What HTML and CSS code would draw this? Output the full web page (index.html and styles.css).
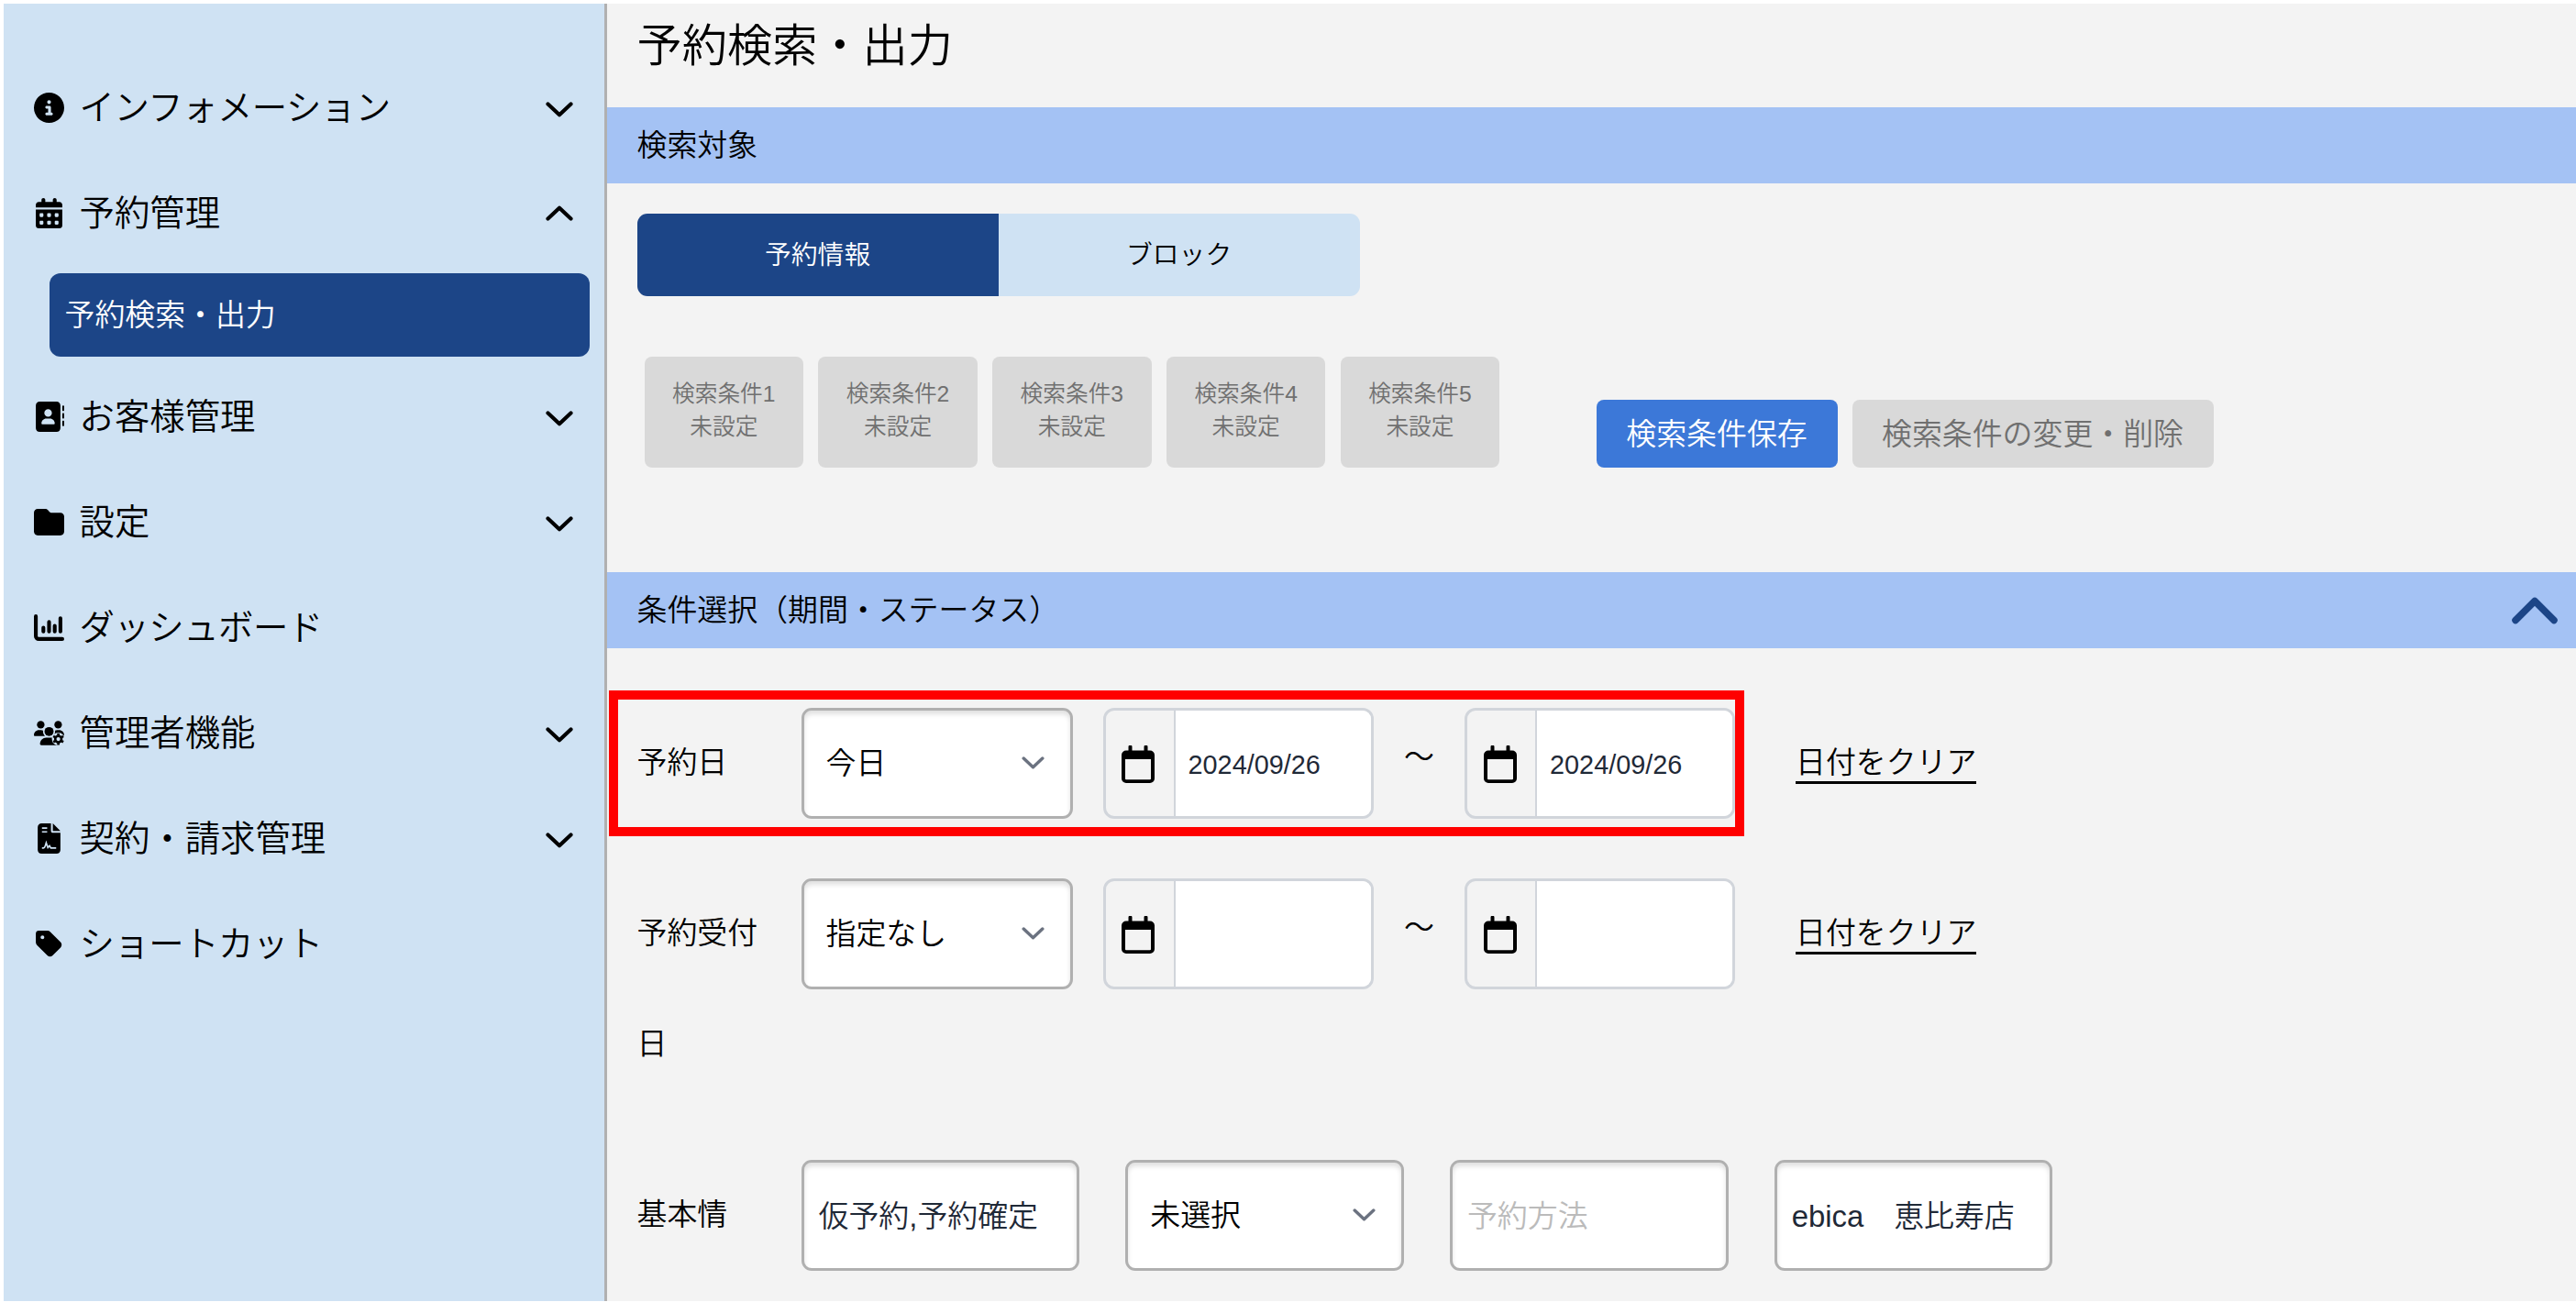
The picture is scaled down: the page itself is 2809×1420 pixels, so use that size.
FILE: index.html
```html
<!DOCTYPE html>
<html lang="ja">
<head>
    <meta charset="UTF-8">
    <meta name="viewport" content="width=device-width, initial-scale=1.0">
    <title>予約検索・出力</title>
    <link rel="stylesheet" href="styles.css">
</head>
<body>
    <!-- 共通アイコン -->
    <svg class="defs" width="0" height="0">
        <symbol id="chevron-down" viewBox="0 0 30 17">
            <path d="M2.5 2.5 L15 14.2 L27.5 2.5" fill="none" stroke="currentColor" stroke-width="4.2" stroke-linecap="round" stroke-linejoin="round"/>
        </symbol>
        <symbol id="chevron-up" viewBox="0 0 30 17">
            <path d="M2.5 14.5 L15 2.8 L27.5 14.5" fill="none" stroke="currentColor" stroke-width="4.2" stroke-linecap="round" stroke-linejoin="round"/>
        </symbol>
        <symbol id="calendar" viewBox="0 0 36 41">
            <path fill-rule="evenodd" d="M7.5 1.5a2 2 0 0 1 4 0V5.500h13V1.500a2 2 0 0 1 4 0V5.500H31a5 5 0 0 1 5 5V36a5 5 0 0 1-5 5H5a5 5 0 0 1-5-5V10.500a5 5 0 0 1 5-5h2.500zM4 15v21.300a1 1 0 0 0 1 1h26a1 1 0 0 0 1-1V15z"/>
        </symbol>
    </svg>

    <div class="layout">
        <nav class="sidebar">
            <a class="menu-item">
                <svg class="menu-icon" viewBox="0 0 512 512"><path d="M256 512A256 256 0 1 0 256 0a256 256 0 1 0 0 512zM216 336h24V272H216c-13.300 0-24-10.700-24-24s10.700-24 24-24h48c13.300 0 24 10.700 24 24v88h8c13.300 0 24 10.700 24 24s-10.700 24-24 24H216c-13.300 0-24-10.700-24-24s10.700-24 24-24zm40-208a32 32 0 1 1 0 64 32 32 0 1 1 0-64z"/></svg>
                <span class="kana">インフォメーション</span>
                <svg class="menu-arrow"><use href="#chevron-down"/></svg>
            </a>
            <a class="menu-item">
                <svg class="menu-icon" viewBox="0 0 448 512"><path d="M128 0c17.700 0 32 14.300 32 32V64H288V32c0-17.700 14.300-32 32-32s32 14.300 32 32V64h48c26.500 0 48 21.500 48 48v48H0V112C0 85.500 21.500 64 48 64H96V32c0-17.700 14.300-32 32-32zM0 192H448V464c0 26.500-21.500 48-48 48H48c-26.500 0-48-21.500-48-48V192zm64 80v32c0 8.800 7.200 16 16 16h32c8.800 0 16-7.200 16-16V272c0-8.800-7.200-16-16-16H80c-8.800 0-16 7.200-16 16zm128 0v32c0 8.800 7.200 16 16 16h32c8.800 0 16-7.200 16-16V272c0-8.800-7.200-16-16-16H208c-8.800 0-16 7.200-16 16zm144-16c-8.800 0-16 7.200-16 16v32c0 8.800 7.200 16 16 16h32c8.800 0 16-7.200 16-16V272c0-8.800-7.200-16-16-16H336zM64 400v32c0 8.800 7.200 16 16 16h32c8.800 0 16-7.200 16-16V400c0-8.800-7.200-16-16-16H80c-8.800 0-16 7.200-16 16zm144-16c-8.800 0-16 7.200-16 16v32c0 8.800 7.200 16 16 16h32c8.800 0 16-7.200 16-16V400c0-8.800-7.200-16-16-16H208zm112 16v32c0 8.800 7.200 16 16 16h32c8.800 0 16-7.200 16-16V400c0-8.800-7.200-16-16-16H336c-8.800 0-16 7.200-16 16z"/></svg>
                <span>予約管理</span>
                <svg class="menu-arrow open"><use href="#chevron-up"/></svg>
            </a>
            <a class="submenu-item active">予約検索・出力</a>
            <a class="menu-item">
                <svg class="menu-icon" viewBox="0 0 512 512"><path d="M96 0C60.700 0 32 28.700 32 64V448c0 35.300 28.700 64 64 64H384c35.300 0 64-28.700 64-64V64c0-35.300-28.700-64-64-64H96zM208 288h64c44.200 0 80 35.800 80 80c0 8.800-7.200 16-16 16H144c-8.800 0-16-7.200-16-16c0-44.200 35.800-80 80-80zm-32-96a64 64 0 1 1 128 0 64 64 0 1 1-128 0zM512 80c0-8.800-7.200-16-16-16s-16 7.200-16 16v64c0 8.800 7.200 16 16 16s16-7.200 16-16V80zM496 192c-8.800 0-16 7.200-16 16v64c0 8.800 7.200 16 16 16s16-7.200 16-16V208c0-8.800-7.200-16-16-16zm16 144c0-8.800-7.200-16-16-16s-16 7.200-16 16v64c0 8.800 7.200 16 16 16s16-7.200 16-16V336z"/></svg>
                <span>お客様管理</span>
                <svg class="menu-arrow"><use href="#chevron-down"/></svg>
            </a>
            <a class="menu-item">
                <svg class="menu-icon" viewBox="0 0 512 512"><path d="M64 480H448c35.300 0 64-28.700 64-64V160c0-35.300-28.700-64-64-64H288c-10.100 0-19.600-4.700-25.600-12.800L243.200 57.600C231.100 41.500 212.100 32 192 32H64C28.700 32 0 60.700 0 96V416c0 35.300 28.700 64 64 64z"/></svg>
                <span>設定</span>
                <svg class="menu-arrow"><use href="#chevron-down"/></svg>
            </a>
            <a class="menu-item">
                <svg class="menu-icon" viewBox="0 0 512 512"><path d="M32 64V400c0 26.500 21.500 48 48 48H480M160 256v64M256 160v160M352 224v96M448 96v224" fill="none" stroke="#000" stroke-width="64" stroke-linecap="round"/></svg>
                <span class="kana">ダッシュボード</span>
            </a>
            <a class="menu-item">
                <svg class="menu-icon" viewBox="0 0 640 512">
                    <circle cx="144" cy="80" r="80"/>
                    <circle cx="512" cy="80" r="80"/>
                    <path d="M0 298.700C0 239.800 47.800 192 106.700 192h42.700c15.900 0 31 3.500 44.600 9.700c-1.300 7.200-1.900 14.700-1.900 22.300c0 38.200 16.800 72.500 43.300 96H21.300C9.600 320 0 310.400 0 298.700z"/>
                    <path d="M405 320c26.500-23.500 43-57.800 43-96c0-7.600-.7-15-1.900-22.300c13.600-6.300 28.700-9.700 44.600-9.700h42.700C592.200 192 640 239.800 640 298.700c0 11.800-9.600 21.300-21.300 21.300z"/>
                    <circle cx="320" cy="224" r="96"/>
                    <path d="M128 485.300C128 411.700 187.700 352 261.300 352H378.700C430 352 474 381 496 423V512H154.700C140 512 128 500 128 485.300z"/>
                    <circle cx="516" cy="384" r="136" class="cut"/>
                    <circle cx="516" cy="384" r="66" fill="none" stroke="#000" stroke-width="50"/>
                    <path d="M516 262v45M516 461v45M410 323l39 22M583 423l39 22M410 445l39-22M583 345l39-22" stroke="#000" stroke-width="52"/>
                </svg>
                <span>管理者機能</span>
                <svg class="menu-arrow"><use href="#chevron-down"/></svg>
            </a>
            <a class="menu-item">
                <svg class="menu-icon" viewBox="0 0 384 512">
                    <path d="M64 0C28.700 0 0 28.700 0 64V448c0 35.300 28.700 64 64 64H320c35.300 0 64-28.700 64-64V160H256c-17.700 0-32-14.300-32-32V0H64zM256 0V128H384L256 0z"/>
                    <path d="M72 80H160M72 144H160M72 416H96C116 416 122 400 128 380L144 328L172 410L200 378L222 416H312" class="cut-line"/>
                </svg>
                <span>契約・請求管理</span>
                <svg class="menu-arrow"><use href="#chevron-down"/></svg>
            </a>
            <a class="menu-item">
                <svg class="menu-icon" viewBox="0 0 448 512"><path d="M0 80V229.500c0 17 6.700 33.300 18.700 45.300l176 176c25 25 65.500 25 90.500 0L418.700 317.300c25-25 25-65.500 0-90.500l-176-176c-12-12-28.300-18.700-45.300-18.700H48C21.500 32 0 53.500 0 80zm112 32a32 32 0 1 1 0 64 32 32 0 1 1 0-64z"/></svg>
                <span class="kana">ショートカット</span>
            </a>
        </nav>

        <main class="content">
            <h1>予約検索・出力</h1>

            <h2 class="section-title">検索対象</h2>
            <div class="target">
                <div class="tabs">
                    <button class="tab active">予約情報</button>
                    <button class="tab">ブロック</button>
                </div>
                <div class="presets">
                    <button class="preset">検索条件1<br>未設定</button>
                    <button class="preset">検索条件2<br>未設定</button>
                    <button class="preset">検索条件3<br>未設定</button>
                    <button class="preset">検索条件4<br>未設定</button>
                    <button class="preset">検索条件5<br>未設定</button>
                    <div class="preset-actions">
                        <button class="btn btn-save">検索条件保存</button>
                        <button class="btn btn-edit">検索条件の変更・削除</button>
                    </div>
                </div>
            </div>

            <h2 class="section-title">
                条件選択（期間・ステータス）
                <svg class="section-arrow" viewBox="0 0 50 30"><path d="M4 25.500 L25 4.500 L46 25.500" fill="none" stroke="currentColor" stroke-width="7.500" stroke-linecap="round" stroke-linejoin="round"/></svg>
            </h2>
            <div class="conditions">
                <div class="row highlight">
                    <div class="label">予約日</div>
                    <div class="field select">今日<svg class="select-arrow"><use href="#chevron-down"/></svg></div>
                    <div class="date">
                        <div class="date-icon"><svg><use href="#calendar"/></svg></div>
                        <div class="date-value">2024/09/26</div>
                    </div>
                    <div class="tilde">〜</div>
                    <div class="date">
                        <div class="date-icon"><svg><use href="#calendar"/></svg></div>
                        <div class="date-value">2024/09/26</div>
                    </div>
                    <a class="clear">日付をクリア</a>
                </div>
                <div class="row">
                    <div class="label">予約受付日</div>
                    <div class="field select">指定なし<svg class="select-arrow"><use href="#chevron-down"/></svg></div>
                    <div class="date">
                        <div class="date-icon"><svg><use href="#calendar"/></svg></div>
                        <div class="date-value"></div>
                    </div>
                    <div class="tilde">〜</div>
                    <div class="date">
                        <div class="date-icon"><svg><use href="#calendar"/></svg></div>
                        <div class="date-value"></div>
                    </div>
                    <a class="clear">日付をクリア</a>
                </div>
                <div class="row basic">
                    <div class="label">基本情</div>
                    <div class="field text">仮予約,予約確定</div>
                    <div class="field select">未選択<svg class="select-arrow"><use href="#chevron-down"/></svg></div>
                    <div class="field text placeholder">予約方法</div>
                    <div class="field text">ebica　恵比寿店</div>
                </div>
            </div>
        </main>
    </div>
</body>
</html>
```

FILE: styles.css
```css
* {
    box-sizing: border-box;
}
body {
    margin: 0;
    padding: 4px 0 1px 4px;
    height: 1420px;
    overflow: hidden;
    background-color: #fff;
    color: #000;
    font-family: "Liberation Sans", "Noto Sans CJK JP", sans-serif;
    font-size: 32.9px;
    font-weight: 350;
}
button {
    border: none;
    padding: 0;
    font-family: inherit;
    font-weight: inherit;
    color: inherit;
}
.defs {
    position: absolute;
}
.layout {
    display: flex;
    height: 1415px;
}
/* サイドバー */
.sidebar {
    width: 657.600px;
    flex-shrink: 0;
    padding: 56px 16px 0 33px;
    background-color: #cfe2f3;
    border-right: 3px solid #b0b0b0;
}
.menu-item {
    display: flex;
    align-items: center;
    height: 115px;
    padding-right: 18px;
    font-size: 38.4px;
    line-height: 1;
}
.menu-item span {
    margin-left: 16.5px;
    padding-top: 1px;
}
.menu-item .kana {
    letter-spacing: -0.5px;
}
.menu-icon {
    width: 33px;
    height: 33px;
}
.menu-icon .cut {
    fill: #cfe2f3;
}
.menu-icon .cut-line {
    fill: none;
    stroke: #cfe2f3;
    stroke-width: 26;
}
.menu-arrow {
    width: 30px;
    height: 17px;
    margin-left: auto;
    margin-top: 4px;
}
.menu-arrow.open {
    margin-top: 0;
    margin-bottom: 1px;
}
.submenu-item {
    display: flex;
    align-items: center;
    height: 91px;
    margin: 8px 0 8px 16.5px;
    padding: 0 0 6px 17px;
    border-radius: 12px;
}
.submenu-item.active {
    background-color: #1c4587;
    color: #fff;
}
/* メイン */
.content {
    flex: 1;
    background-color: #f3f3f3;
}
h1 {
    margin: 0;
    height: 113px;
    padding-left: 33px;
    font-size: 49.2px;
    font-weight: inherit;
    line-height: 92px;
}
.section-title {
    display: flex;
    justify-content: space-between;
    align-items: center;
    margin: 0;
    height: 83px;
    padding: 0 20px 6px 33px;
    background-color: #a4c2f4;
    font-size: 32.9px;
    font-weight: inherit;
}
.section-arrow {
    width: 50px;
    height: 30px;
    margin-top: 6px;
    color: #1c4587;
}
.target {
    height: 424px;
    padding: 33px 33px 0;
}
.tabs {
    display: flex;
    width: 788px;
    height: 90px;
    border-radius: 11px;
    overflow: hidden;
}
.tab {
    flex: 1;
    padding-bottom: 6px;
    background-color: #cfe2f3;
    font-size: 28.8px;
}
.tab.active {
    background-color: #1c4587;
    color: #fff;
}
.presets {
    display: flex;
    gap: 16.4px;
    margin: 65.5px 0 0 8px;
    height: 121px;
}
.preset {
    width: 173.400px;
    padding-bottom: 3px;
    border-radius: 8px;
    background-color: #d9d9d9;
    color: #707070;
    font-size: 24.7px;
    line-height: 36px;
}
.preset-actions {
    display: flex;
    gap: 16px;
    align-items: flex-end;
    margin-left: 89px;
}
.btn {
    height: 74px;
    padding-bottom: 5px;
    border-radius: 8px;
    font-size: 32.9px;
}
.btn-save {
    width: 263px;
    background-color: #3c78d8;
    color: #fff;
}
.btn-edit {
    width: 394px;
    background-color: #d9d9d9;
    color: #707070;
}
/* 条件選択 */
.conditions {
    padding: 65px 0 0 33px;
}
.row {
    display: flex;
    align-items: flex-start;
    position: relative;
    margin-bottom: 65.6px;
}
.highlight::after {
    content: "";
    position: absolute;
    left: -31px;
    top: -19px;
    width: 1238px;
    height: 159px;
    box-sizing: border-box;
    border: 10px solid #f00;
}
.label {
    width: 179px;
    padding-right: 40px;
    line-height: 120.600px;
}
.field {
    display: flex;
    align-items: center;
    justify-content: space-between;
    width: 296px;
    height: 120.600px;
    background-color: #fff;
    border: 3px solid #b0b0b0;
    border-radius: 11px;
    box-shadow: inset 0 4px 5px rgba(0,0,0,0.12);
}
.select {
    padding: 0 28px 6px 24px;
}
.select-arrow {
    width: 25px;
    height: 14px;
    margin-top: 6px;
    color: #6b7280;
}
.date {
    display: flex;
    width: 295px;
    height: 120.600px;
    border: 3px solid #d1d5db;
    border-radius: 12px;
    overflow: hidden;
}
.select + .date {
    margin-left: 33px;
}
.date-icon {
    display: flex;
    align-items: center;
    justify-content: center;
    width: 76px;
    padding-right: 3px;
    border-right: 2px solid #d1d5db;
}
.date-icon svg {
    width: 36px;
    height: 41px;
    margin-top: 3px;
}
.date-value {
    flex: 1;
    padding-left: 14px;
    background-color: #fff;
    color: #1f2937;
    font-size: 28.8px;
    line-height: 119px;
}
.tilde {
    width: 99.5px;
    text-align: center;
    line-height: 108px;
}
.clear {
    margin: 40px 0 0 66px;
    border-bottom: 3px solid #000;
    line-height: 40px;
}
.basic .field {
    width: 303.800px;
    margin-right: 49.900px;
}
.text {
    padding-left: 16px;
    padding-bottom: 4px;
    color: #1f2937;
}
.placeholder {
    color: #bbb;
}
```
